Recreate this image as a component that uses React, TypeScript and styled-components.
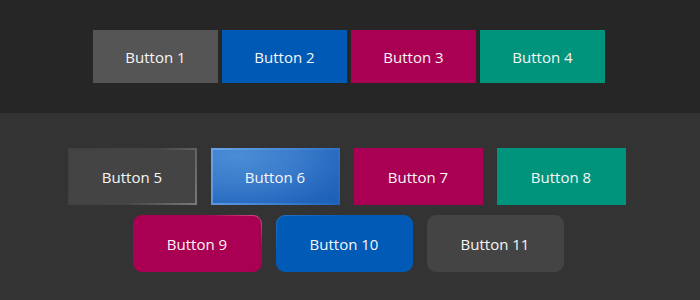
import React from "react";
import styled, { createGlobalStyle, css } from "styled-components";

const Global = createGlobalStyle`
  html, body { margin: 0; padding: 0; background: #333333; }
  body { font-family: "Open Sans", "Noto Sans", sans-serif; }
`;

const Page = styled.div`
  width: 700px;
  height: 300px;
  display: flex;
  flex-direction: column;
`;

const TopBand = styled.section`
  height: 113px;
  background: #262626;
  display: flex;
  justify-content: center;
  align-items: flex-start;
  padding-top: 30px;
  padding-right: 2px;
  box-sizing: border-box;
  gap: 4px;
`;

const BottomBand = styled.section`
  flex: 1;
  background: #333333;
  display: flex;
  flex-direction: column;
  align-items: center;
  padding-top: 35px;
  gap: 10px;
`;

const Row = styled.div<{ $gap: number; $shift: number }>`
  display: flex;
  gap: ${(p) => p.$gap}px;
  margin-left: ${(p) => p.$shift}px;
`;

type Variant = "gray" | "blue" | "magenta" | "teal" | "dark";

const fills: Record<Variant, string> = {
  gray: "#555555",
  blue: "#0059b5",
  magenta: "#aa0053",
  teal: "#00947c",
  dark: "#444444",
};

const label = css`
  color: #f6f6f6;
  font-family: inherit;
  font-size: 15px;
  padding: 0;
  margin: 0;
  cursor: pointer;
`;

const FlatButton = styled.button<{ $v: Variant }>`
  ${label}
  width: 125px;
  height: 53px;
  border: none;
  background: ${(p) => fills[p.$v]};
`;

const BorderButton = styled.button<{ $v: "ghost" | "glass" | "magenta" | "teal" }>`
  ${label}
  width: 129px;
  height: 57px;
  box-sizing: border-box;
  border: 2px solid transparent;
  ${(p) =>
    p.$v === "ghost" &&
    css`
      background:
        linear-gradient(#444444, #444444) padding-box,
        linear-gradient(120deg, #404040 0%, #444 55%, #7a7a7a 100%) border-box;
    `}
  ${(p) =>
    p.$v === "glass" &&
    css`
      background:
        radial-gradient(ellipse 120% 140% at 20% 10%, #4c8dd6 0%, #3a7bcb 40%, #2265bb 75%, #185cb6 100%) padding-box,
        linear-gradient(120deg, #6aa3e4 0%, #3f80cf 60%, #1f63bd 100%) border-box;
    `}
  ${(p) =>
    p.$v === "magenta" &&
    css`
      background: #aa0053;
      border-color: #aa0053;
    `}
  ${(p) =>
    p.$v === "teal" &&
    css`
      background: #00947c;
      border-color: #00947c;
    `}
`;

const RoundButton = styled.button<{ $v: "magenta" | "blue" | "dark"; $w: number }>`
  ${label}
  width: ${(p) => p.$w}px;
  height: 57px;
  box-sizing: border-box;
  border-radius: 9px;
  border: 1px solid transparent;
  ${(p) =>
    p.$v === "magenta" &&
    css`
      background:
        linear-gradient(#aa0053, #aa0053) padding-box,
        linear-gradient(210deg, #d0508a 0%, #aa0053 25%, #aa0053 100%) border-box;
    `}
  ${(p) =>
    p.$v === "blue" &&
    css`
      background:
        linear-gradient(#005ab6, #005ab6) padding-box,
        linear-gradient(150deg, #2a74c4 0%, #005ab6 30%, #005ab6 100%) border-box;
    `}
  ${(p) =>
    p.$v === "dark" &&
    css`
      background: #444444;
      border-color: #444444;
    `}
`;

export default function App() {
  return (
    <>
      <Global />
      <Page>
        <TopBand>
          <FlatButton $v="gray">Button 1</FlatButton>
          <FlatButton $v="blue">Button 2</FlatButton>
          <FlatButton $v="magenta">Button 3</FlatButton>
          <FlatButton $v="teal">Button 4</FlatButton>
        </TopBand>
        <BottomBand>
          <Row $gap={14} $shift={-7}>
            <BorderButton $v="ghost">Button 5</BorderButton>
            <BorderButton $v="glass">Button 6</BorderButton>
            <BorderButton $v="magenta">Button 7</BorderButton>
            <BorderButton $v="teal">Button 8</BorderButton>
          </Row>
          <Row $gap={14} $shift={-4}>
            <RoundButton $v="magenta" $w={129}>Button 9</RoundButton>
            <RoundButton $v="blue" $w={137}>Button 10</RoundButton>
            <RoundButton $v="dark" $w={137}>Button 11</RoundButton>
          </Row>
        </BottomBand>
      </Page>
    </>
  );
}
